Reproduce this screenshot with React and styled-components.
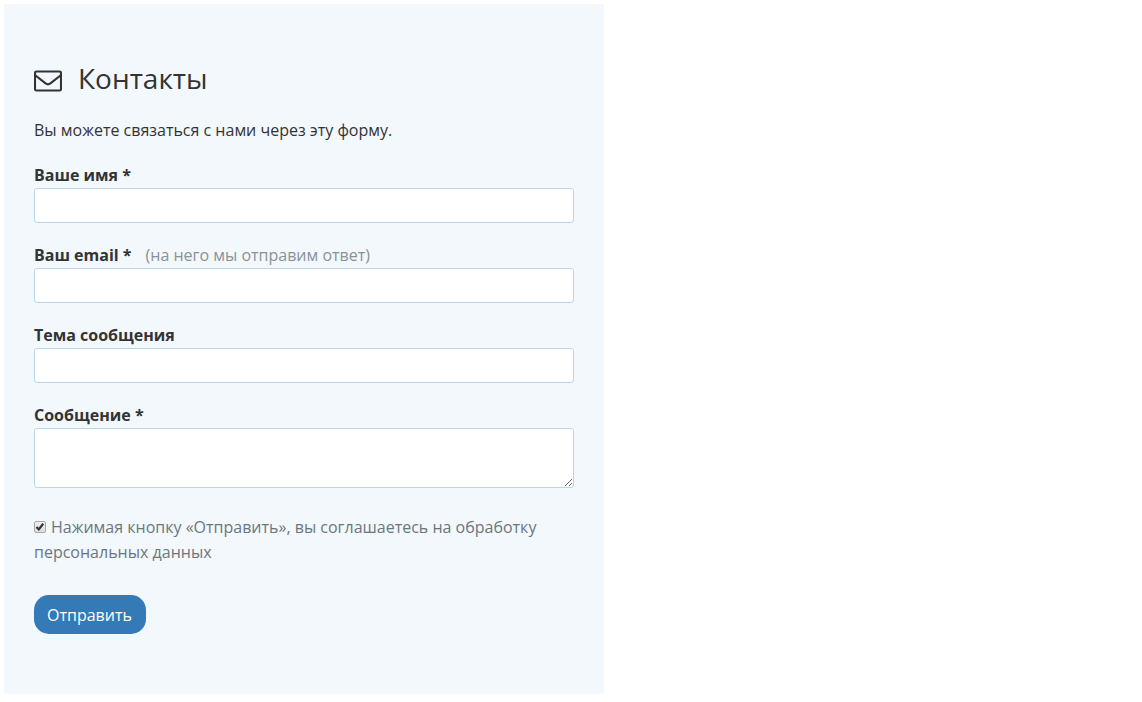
import React from "react";
import styled, { createGlobalStyle } from "styled-components";

const GlobalStyle = createGlobalStyle`
  *, *::before, *::after { box-sizing: border-box; }
  body {
    margin: 0;
    padding: 4px;
    background: #fff;
    color: #333;
    font: 400 16px/25px "Open Sans", "Noto Sans", sans-serif;
  }
`;

const Panel = styled.main`
  max-width: 600px;
  padding: 60px 30px;
  background: #f2f8fc;
`;

const Heading = styled.h1`
  display: flex;
  align-items: flex-end;
  gap: 16px;
  margin: 0 0 26px;
  font-size: 28px;
  font-weight: 400;
  line-height: 28px;
`;

const Intro = styled.p`
  margin: 0 0 20px;
`;

const Form = styled.form`
  display: flex;
  flex-direction: column;
  align-items: stretch;
`;

const Field = styled.div`
  display: flex;
  flex-direction: column;
  margin-bottom: 20px;
`;

const Label = styled.label`
  font-weight: 700;
`;

const Hint = styled.span`
  margin-left: 14px;
  color: #88929a;
  font-weight: 400;
`;

const Input = styled.input`
  width: 100%;
  height: 35px;
  padding: 4px 8px;
  border: 1px solid #b8d6eb;
  border-radius: 3px;
  background: #fff;
  color: inherit;
  font: inherit;
`;

const Textarea = styled(Input)`
  height: 60px;
  resize: vertical;
`;

const Consent = styled.label`
  margin: 7px 0 30px;
  color: #6c7680;
`;

const Checkbox = styled.input`
  appearance: none;
  width: 12px;
  height: 12px;
  margin: 0 5px 0 0;
  border: 1px solid #a9a9a9;
  border-radius: 2px;
  background: linear-gradient(#eee, #ddd);
  vertical-align: 0;

  &:checked {
    background: url("data:image/svg+xml,%3Csvg xmlns='http://www.w3.org/2000/svg' viewBox='0 0 10 10'%3E%3Cpath d='M1.5 5l2.3 2.4 4.4-5.6' fill='none' stroke='%23333' stroke-width='2.2'/%3E%3C/svg%3E") center / 10px 10px no-repeat, linear-gradient(#eee, #ddd);
  }
`;

const SubmitButton = styled.button`
  align-self: flex-start;
  padding: 8px 14px 6px 13px;
  border: 0;
  border-radius: 15px;
  background: #337ab7;
  color: #fff;
  font: 400 16px/25px "Open Sans", "Noto Sans", sans-serif;
  cursor: pointer;
`;

const fields = [
  { id: "name", label: "Ваше имя *" },
  { id: "email", label: "Ваш email *", type: "email", hint: "(на него мы отправим ответ)" },
  { id: "subject", label: "Тема сообщения" },
  { id: "message", label: "Сообщение *", multiline: true },
];

function EnvelopeIcon() {
  return (
    <svg width="28" height="22" viewBox="0 0 28 22" fill="none" stroke="#333" strokeWidth="2.1" strokeLinejoin="round" aria-hidden="true">
      <rect x="1" y="1.5" width="26" height="19" rx="1.3" />
      <path d="M1.2 5.2L11.6 13.4Q14 15.2 16.4 13.4L26.8 5.2" />
    </svg>
  );
}

export default function App() {
  return (
    <>
      <GlobalStyle />
      <Panel>
        <Heading>
          <EnvelopeIcon />
          Контакты
        </Heading>
        <Intro>Вы можете связаться с нами через эту форму.</Intro>
        <Form onSubmit={(event) => event.preventDefault()}>
          {fields.map(({ id, label, type = "text", hint, multiline }) => (
            <Field key={id}>
              <Label htmlFor={id}>
                {label}
                {hint && <Hint>{hint}</Hint>}
              </Label>
              {multiline ? <Textarea as="textarea" id={id} name={id} /> : <Input id={id} name={id} type={type} />}
            </Field>
          ))}
          <Consent>
            <Checkbox type="checkbox" name="consent" defaultChecked />
            Нажимая кнопку «Отправить», вы соглашаетесь на обработку персональных данных
          </Consent>
          <SubmitButton type="submit">Отправить</SubmitButton>
        </Form>
      </Panel>
    </>
  );
}
